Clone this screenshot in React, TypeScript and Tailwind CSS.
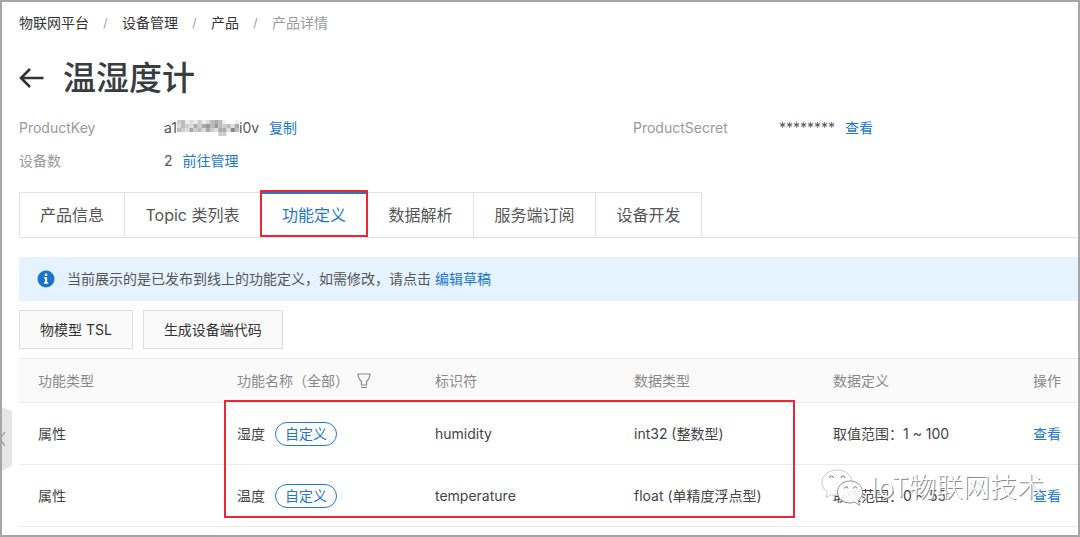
import type { ReactNode } from 'react';

const TABS = [
  { id: 'info', label: '产品信息', width: 'w-[106px]' },
  { id: 'topic', label: 'Topic 类列表', width: 'w-[135px] border-r-0' },
  { id: 'define', label: '功能定义', width: 'w-[108px]' },
  { id: 'parse', label: '数据解析', width: 'w-[106px]' },
  { id: 'subscribe', label: '服务端订阅', width: 'w-[122px]' },
  { id: 'dev', label: '设备开发', width: 'w-[106px]' },
];

const CRUMBS = ['物联网平台', '设备管理', '产品'];

const ROWS = [
  { name: '湿度', identifier: 'humidity', dataType: 'int32 (整数型)', range: '取值范围：1 ~ 100' },
  { name: '温度', identifier: 'temperature', dataType: 'float (单精度浮点型)', range: '取值范围：0 ~ 55' },
];

// Blurred-out part of the product key, one row of cells per line.
const MOSAIC = [
  ['#ccc', '#bbb', '#eee', '#ddd', '#eee', '#ccc', '#eee', '#ddd', '#bbb', '#aaa', '#bbb', '#eee', '#fff', '#fff', '#eee'],
  ['#ddd', '#bbb', '#ccc', '#ddd', '#aaa', '#ccc', '#aaa', '#999', '#bbb', '#999', '#bbb', '#ccc', '#bbb', '#ddd', '#aaa'],
  ['#bbb', '#ccc', '#ddd', '#aaa', '#ccc', '#bbb', '#ddd', '#aaa', '#ccc', '#ddd', '#aaa', '#aaa', '#ddd', '#888', '#bbb'],
  ['#fff', '#fff', '#fff', '#fff', '#fff', '#fff', '#fff', '#fff', '#fff', '#fff', '#ccc', '#ccc', '#fff', '#fff', '#fff'],
];

function TextLink({ children }: { children: ReactNode }) {
  return (
    <a href="#" className="text-[#2277cc]">
      {children}
    </a>
  );
}

function MaskedKey() {
  return (
    <svg width="62" height="16" viewBox="0 0 60 16" preserveAspectRatio="none" className="shrink-0" aria-hidden="true">
      {MOSAIC.map((line, y) =>
        line.map((fill, x) => (
          <rect key={`${x}-${y}`} x={x * 4} y={y * 4} width="4" height="4" fill={fill} />
        )),
      )}
    </svg>
  );
}

function BackArrow() {
  return (
    <svg width="26" height="22" viewBox="0 0 26 22" fill="none" stroke="#333" strokeWidth="2.6" aria-hidden="true">
      <path d="M1.500 11h23M11 2l-9 9 9 9" />
    </svg>
  );
}

function FilterIcon() {
  return (
    <svg width="14" height="16" viewBox="0 0 14 16" fill="none" stroke="#888" strokeWidth="1.2" aria-hidden="true">
      <path d="M1 1h12c0 4-1.2 5.500-3.500 7.500v3.500h-5v-3.500C2.200 6.500 1 5 1 1z" />
      <path d="M4 14.400h6" />
    </svg>
  );
}

function InfoIcon() {
  return (
    <svg width="18" height="18" viewBox="0 0 18 18" className="shrink-0" aria-hidden="true">
      <circle cx="9" cy="9" r="8.500" fill="#1b74ca" />
      <circle cx="9" cy="4.800" r="1.400" fill="#fff" />
      <path d="M7 7.200h3.100v5.100h1.100v1.400H6.900v-1.400H8V8.600H7z" fill="#fff" />
    </svg>
  );
}

function ChatLogo() {
  return (
    <svg width="42" height="38" viewBox="0 0 42 38" aria-hidden="true">
      <g fill="#fff" fillOpacity="0.9" strokeWidth="0.800">
        <path
          d="M16 1C7.500 1 1 6.500 1 13.500c0 4 2.200 7.500 5.600 9.800L5 28.500l5.500-2.800c1.800.5 3.500.7 5.500.7 8.500 0 15-5.600 15-12.900S24.500 1 16 1z"
          stroke="#bbb"
        />
        <path
          d="M29 12c-7.200 0-12.500 4.800-12.500 11S21.800 34 29 34c1.700 0 3.200-.2 4.700-.7l5 2.900-1.400-4.500c2.700-2 4.200-5 4.200-8.700 0-6.200-5.300-11-12.500-11z"
          stroke="#777"
        />
      </g>
      <g fill="none" stroke="#777" strokeWidth="1">
        <path d="M8.500 9a2 2 0 0 1 4 0M20 9a2 2 0 0 1 4 0M23.500 19.500a1.700 1.700 0 0 1 3.400 0M32.500 19.500a1.700 1.700 0 0 1 3.400 0" />
      </g>
    </svg>
  );
}

function Watermark() {
  return (
    <div className="pointer-events-none absolute right-[34px] bottom-[28px] flex items-center gap-2">
      <ChatLogo />
      <span className="text-[27px] leading-9 font-light text-white [text-shadow:1px_1px_0_#888]">IoT物联网技术</span>
    </div>
  );
}

function Breadcrumb() {
  return (
    <nav className="flex items-center text-sm leading-5">
      {CRUMBS.map(crumb => (
        <span key={crumb} className="flex items-center">
          <a href="#" className="text-[#333]">
            {crumb}
          </a>
          <span className="w-[33px] text-center text-xs text-[#999]">/</span>
        </span>
      ))}
      <span className="text-[#999]">产品详情</span>
    </nav>
  );
}

function TabBar() {
  return (
    <div role="tablist" className="mt-[21px] flex h-[46px] border-b border-[#e2e2e2] text-base whitespace-nowrap">
      {TABS.map(tab =>
        tab.id === 'define' ? (
          <button
            key={tab.id}
            type="button"
            role="tab"
            aria-selected="true"
            className={`relative -my-0.5 h-[47px] border-2 border-[#ed2636] pt-0.5 text-[#2277cc] ${tab.width}`}
          >
            <span className="absolute inset-x-0 top-0 h-0.5 bg-[#2277cc]" />
            {tab.label}
          </button>
        ) : (
          <button
            key={tab.id}
            type="button"
            role="tab"
            aria-selected="false"
            className={`border-t border-r border-[#e2e2e2] text-[#555] first:border-l ${tab.width}`}
          >
            {tab.label}
          </button>
        ),
      )}
    </div>
  );
}

function FeatureTable() {
  return (
    <div className="relative mt-[9px]">
      <table className="w-full table-fixed border-collapse text-left text-sm">
        <colgroup>
          <col className="w-[199px]" />
          <col className="w-[198px]" />
          <col className="w-[199px]" />
          <col className="w-[199px]" />
          <col className="w-[200px]" />
          <col />
        </colgroup>
        <thead className="bg-[#fafafa] text-[#888]">
          <tr className="h-[44px] border-y border-[#ebebeb]">
            <th className="pl-[19px] font-normal">功能类型</th>
            <th className="pl-[19px] font-normal">
              <span className="flex items-center gap-2">
                <span>功能名称（全部）</span>
                <FilterIcon />
              </span>
            </th>
            <th className="pl-[19px] font-normal">标识符</th>
            <th className="pl-[19px] font-normal">数据类型</th>
            <th className="pl-[19px] font-normal">数据定义</th>
            <th className="pl-[19px] font-normal">操作</th>
          </tr>
        </thead>
        <tbody className="text-[#444]">
          {ROWS.map(row => (
            <tr key={row.identifier} className="h-[62px] border-b border-[#ebebeb]">
              <td className="pl-[19px]">属性</td>
              <td className="pl-[19px]">
                <span className="flex items-center gap-2.5">
                  {row.name}
                  <span className="rounded-full border border-[#2277cc] px-[9px] leading-[22px] text-[#2277cc]">
                    自定义
                  </span>
                </span>
              </td>
              <td className="pl-[19px]">{row.identifier}</td>
              <td className="pl-[19px]">{row.dataType}</td>
              <td className="pl-[19px]">{row.range}</td>
              <td className="pl-[19px]">
                <TextLink>查看</TextLink>
              </td>
            </tr>
          ))}
        </tbody>
      </table>
      <div className="pointer-events-none absolute top-[42px] left-[205px] h-[118px] w-[571px] border-2 border-[#ed2636]" />
    </div>
  );
}

export default function App() {
  return (
    <main className="relative border-2 border-[#a6a6a6] bg-white pb-[8px] font-[Inter,'Noto_Sans_CJK_SC',sans-serif] text-[#555]">
      <div className="pt-[11px] pl-[17px]">
        <Breadcrumb />

        <header className="mt-[21px] flex items-center gap-[18px]">
          <button type="button" aria-label="返回">
            <BackArrow />
          </button>
          <h1 className="text-[33px] leading-[48px] font-medium text-[#373d41]">温湿度计</h1>
        </header>

        <dl className="mt-4 grid grid-cols-[145px_469px_146px_1fr] gap-y-[13px] text-sm leading-5">
          <dt className="text-[#999]">ProductKey</dt>
          <dd className="flex items-center">
            a1
            <MaskedKey />
            i0v
            <span className="ml-2.5">
              <TextLink>复制</TextLink>
            </span>
          </dd>
          <dt className="text-[#999]">ProductSecret</dt>
          <dd className="flex items-center gap-2.5">
            <span>********</span>
            <TextLink>查看</TextLink>
          </dd>
          <dt className="text-[#999]">设备数</dt>
          <dd className="flex items-center gap-2.5">
            2<TextLink>前往管理</TextLink>
          </dd>
        </dl>

        <TabBar />

        <div className="mt-[19px] flex h-11 items-center gap-3 bg-[#e5f2ff] pl-[18px] text-sm">
          <InfoIcon />
          <p>
            当前展示的是已发布到线上的功能定义，如需修改，请点击 <TextLink>编辑草稿</TextLink>
          </p>
        </div>

        <div className="mt-[9px] flex gap-2.5 text-sm text-[#333]">
          <button type="button" className="h-[39px] border border-[#dedede] bg-[#fafafa] px-5">
            物模型 TSL
          </button>
          <button type="button" className="h-[39px] border border-[#dedede] bg-[#fafafa] px-5">
            生成设备端代码
          </button>
        </div>

        <FeatureTable />
      </div>

      <button type="button" aria-label="收起侧栏" className="absolute bottom-[64px] left-0">
        <svg width="10" height="64" viewBox="0 0 10 64">
          <path d="M0 0l10 4v55L0 64z" fill="#e6e6e6" />
          <path d="M3 25l-5 7 5 7" fill="none" stroke="#999" strokeWidth="1.200" />
        </svg>
      </button>

      <Watermark />
    </main>
  );
}
